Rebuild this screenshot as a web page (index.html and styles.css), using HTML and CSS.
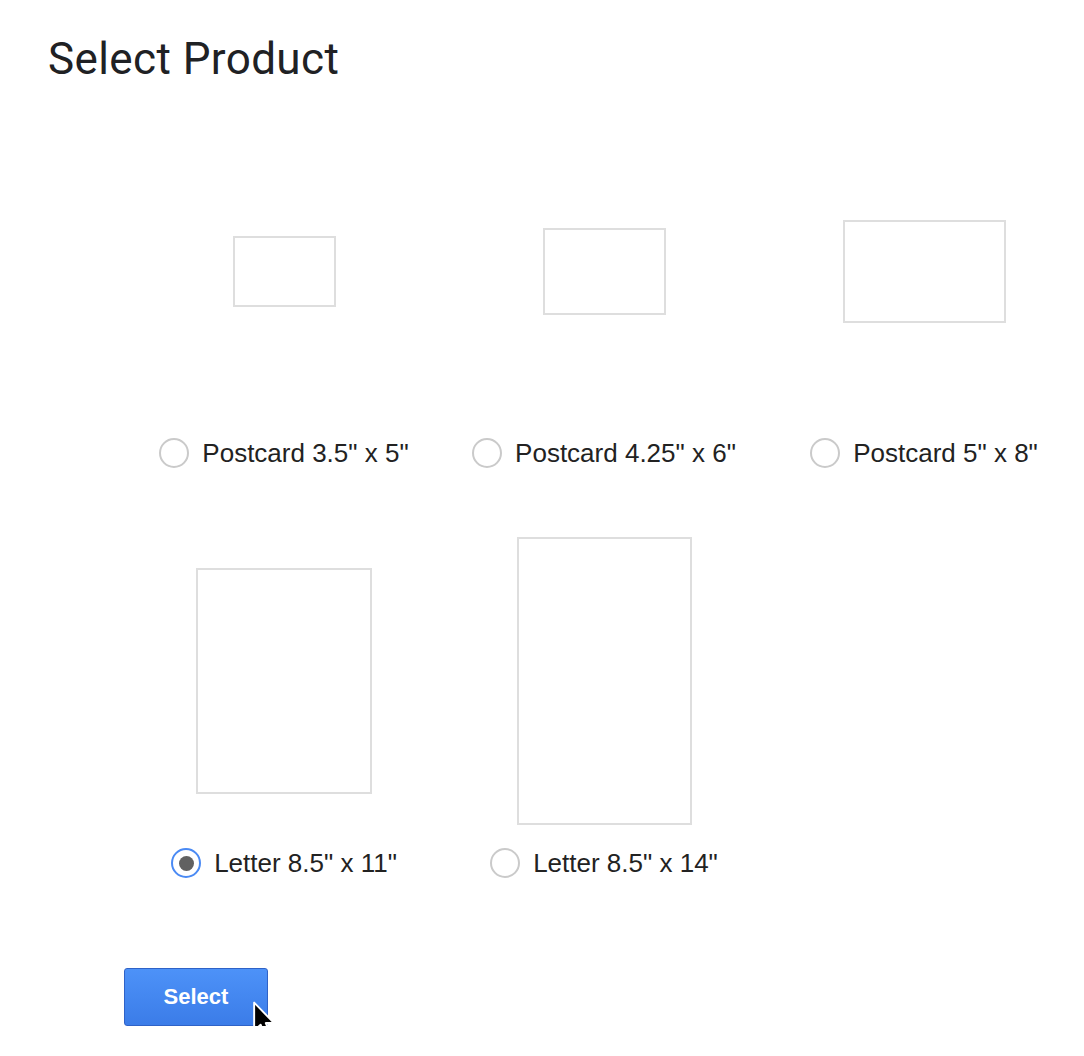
FILE: index.html
```html
<!DOCTYPE html>
<html>
<head>
<meta charset="utf-8">
<title>Select Product</title>
<link rel="stylesheet" href="styles.css">
</head>
<body>
<h1 class="title">Select Product</h1>
<div class="grid">
  <div class="cell">
    <div class="preview"><div class="sheet s-pc35"></div></div>
    <label class="option"><span class="radio"></span><span class="text">Postcard 3.5" x 5"</span></label>
  </div>
  <div class="cell">
    <div class="preview"><div class="sheet s-pc425"></div></div>
    <label class="option"><span class="radio"></span><span class="text">Postcard 4.25" x 6"</span></label>
  </div>
  <div class="cell">
    <div class="preview"><div class="sheet s-pc5"></div></div>
    <label class="option"><span class="radio"></span><span class="text">Postcard 5" x 8"</span></label>
  </div>
  <div class="cell">
    <div class="preview"><div class="sheet s-l11"></div></div>
    <label class="option"><span class="radio checked"></span><span class="text">Letter 8.5" x 11"</span></label>
  </div>
  <div class="cell">
    <div class="preview"><div class="sheet s-l14"></div></div>
    <label class="option"><span class="radio"></span><span class="text">Letter 8.5" x 14"</span></label>
  </div>
</div>
<div class="actions">
  <button class="btn">Select</button>
  <svg class="cursor" width="28" height="42" viewBox="0 0 26 38">
    <path d="M2 1 L2 27 L8 21.5 L12.5 32 L17 30 L12.8 20 L20.5 20 Z" fill="#000" stroke="#fff" stroke-width="1.8" stroke-linejoin="round"/>
  </svg>
</div>
</body>
</html>
```
FILE: styles.css
```css
html, body {
  margin: 0;
  padding: 0;
  background: #fff;
}
body {
  font-family: "Liberation Sans", Arial, sans-serif;
  color: #222;
}
.title {
  margin: 0;
  padding: 35px 0 0 48px;
  font-family: Roboto, "Open Sans", sans-serif;
  font-weight: 400;
  font-size: 44px;
  line-height: 48px;
  letter-spacing: 0.4px;
  color: #202124;
}
.grid {
  margin: 38px 0 0 124px;
  width: 960px;
  display: grid;
  grid-template-columns: repeat(3, 320px);
  row-gap: 63px;
}
.cell {
  display: flex;
  flex-direction: column;
  align-items: center;
}
.preview {
  height: 300px;
  width: 320px;
  display: flex;
  align-items: center;
  justify-content: center;
}
.sheet {
  box-sizing: border-box;
  border: 2px solid #dedede;
  background: #fff;
}
.s-pc35 { width: 103px; height: 71px; }
.s-pc425 { width: 123px; height: 87px; }
.s-pc5 { width: 163px; height: 103px; }
.s-l11 { width: 176px; height: 226px; }
.s-l14 { width: 175px; height: 288px; }
.option {
  margin-top: 17px;
  height: 30px;
  display: flex;
  align-items: center;
  gap: 13px;
  font-size: 26px;
  color: #222;
  white-space: nowrap;
}
.radio {
  box-sizing: border-box;
  width: 30px;
  height: 30px;
  border: 2px solid #cacaca;
  border-radius: 50%;
  display: flex;
  align-items: center;
  justify-content: center;
  flex: none;
}
.radio.checked {
  border-color: #4a8af4;
}
.radio.checked::after {
  content: "";
  width: 15px;
  height: 15px;
  border-radius: 50%;
  background: #616161;
}
.actions {
  position: relative;
  margin: 90px 0 0 124px;
  width: 160px;
}
.btn {
  box-sizing: border-box;
  width: 144px;
  height: 58px;
  border: 1px solid #2f62c7;
  border-radius: 3px;
  background: linear-gradient(#4d92f8, #3b7ce8);
  color: #fff;
  font-family: "Liberation Sans", Arial, sans-serif;
  font-weight: 700;
  font-size: 22px;
  padding: 0;
  cursor: pointer;
}
.cursor {
  position: absolute;
  left: 128px;
  top: 33px;
}
```
